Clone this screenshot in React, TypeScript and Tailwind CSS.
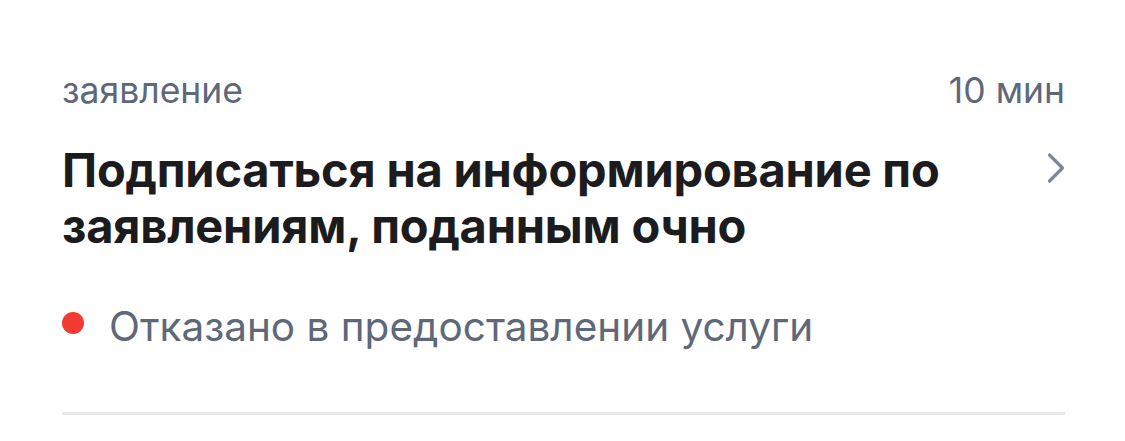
export default function App() {
  return (
    <div className="w-[1125px] h-[441px] bg-white font-['Inter',sans-serif]">
      <div className="pl-[62px] pr-[60px] pt-[70px]">
        <div className="flex items-center justify-between text-[35.5px] leading-[42px] text-[#5e6879]">
          <span>заявление</span>
          <span>10 мин</span>
        </div>
        <div className="mt-[30px] flex items-start justify-between">
          <h2 className="text-[47px] font-bold leading-[56px] text-[#1c1c1e] max-w-[940px] tracking-[-0.2px]">
            Подписаться на информирование по заявлениям, поданным очно
          </h2>
          <svg width="18" height="32" viewBox="0 0 18 32" className="mt-[10px] shrink-0" fill="none">
            <path d="M2.5 3 L15.5 16 L2.5 29" stroke="#7e8699" strokeWidth="3.2" strokeLinecap="round" strokeLinejoin="round" />
          </svg>
        </div>
        <div className="mt-[49px] flex items-start gap-[25px]">
          <span className="mt-[9px] w-[22px] h-[22px] shrink-0 rounded-full bg-[#f03a32]" />
          <span className="text-[40.5px] leading-[48px] text-[#5e6879]">Отказано в предоставлении услуги</span>
        </div>
        <div className="mt-[61px] h-[3px] bg-[#e8e9ed]" />
      </div>
    </div>
  );
}
